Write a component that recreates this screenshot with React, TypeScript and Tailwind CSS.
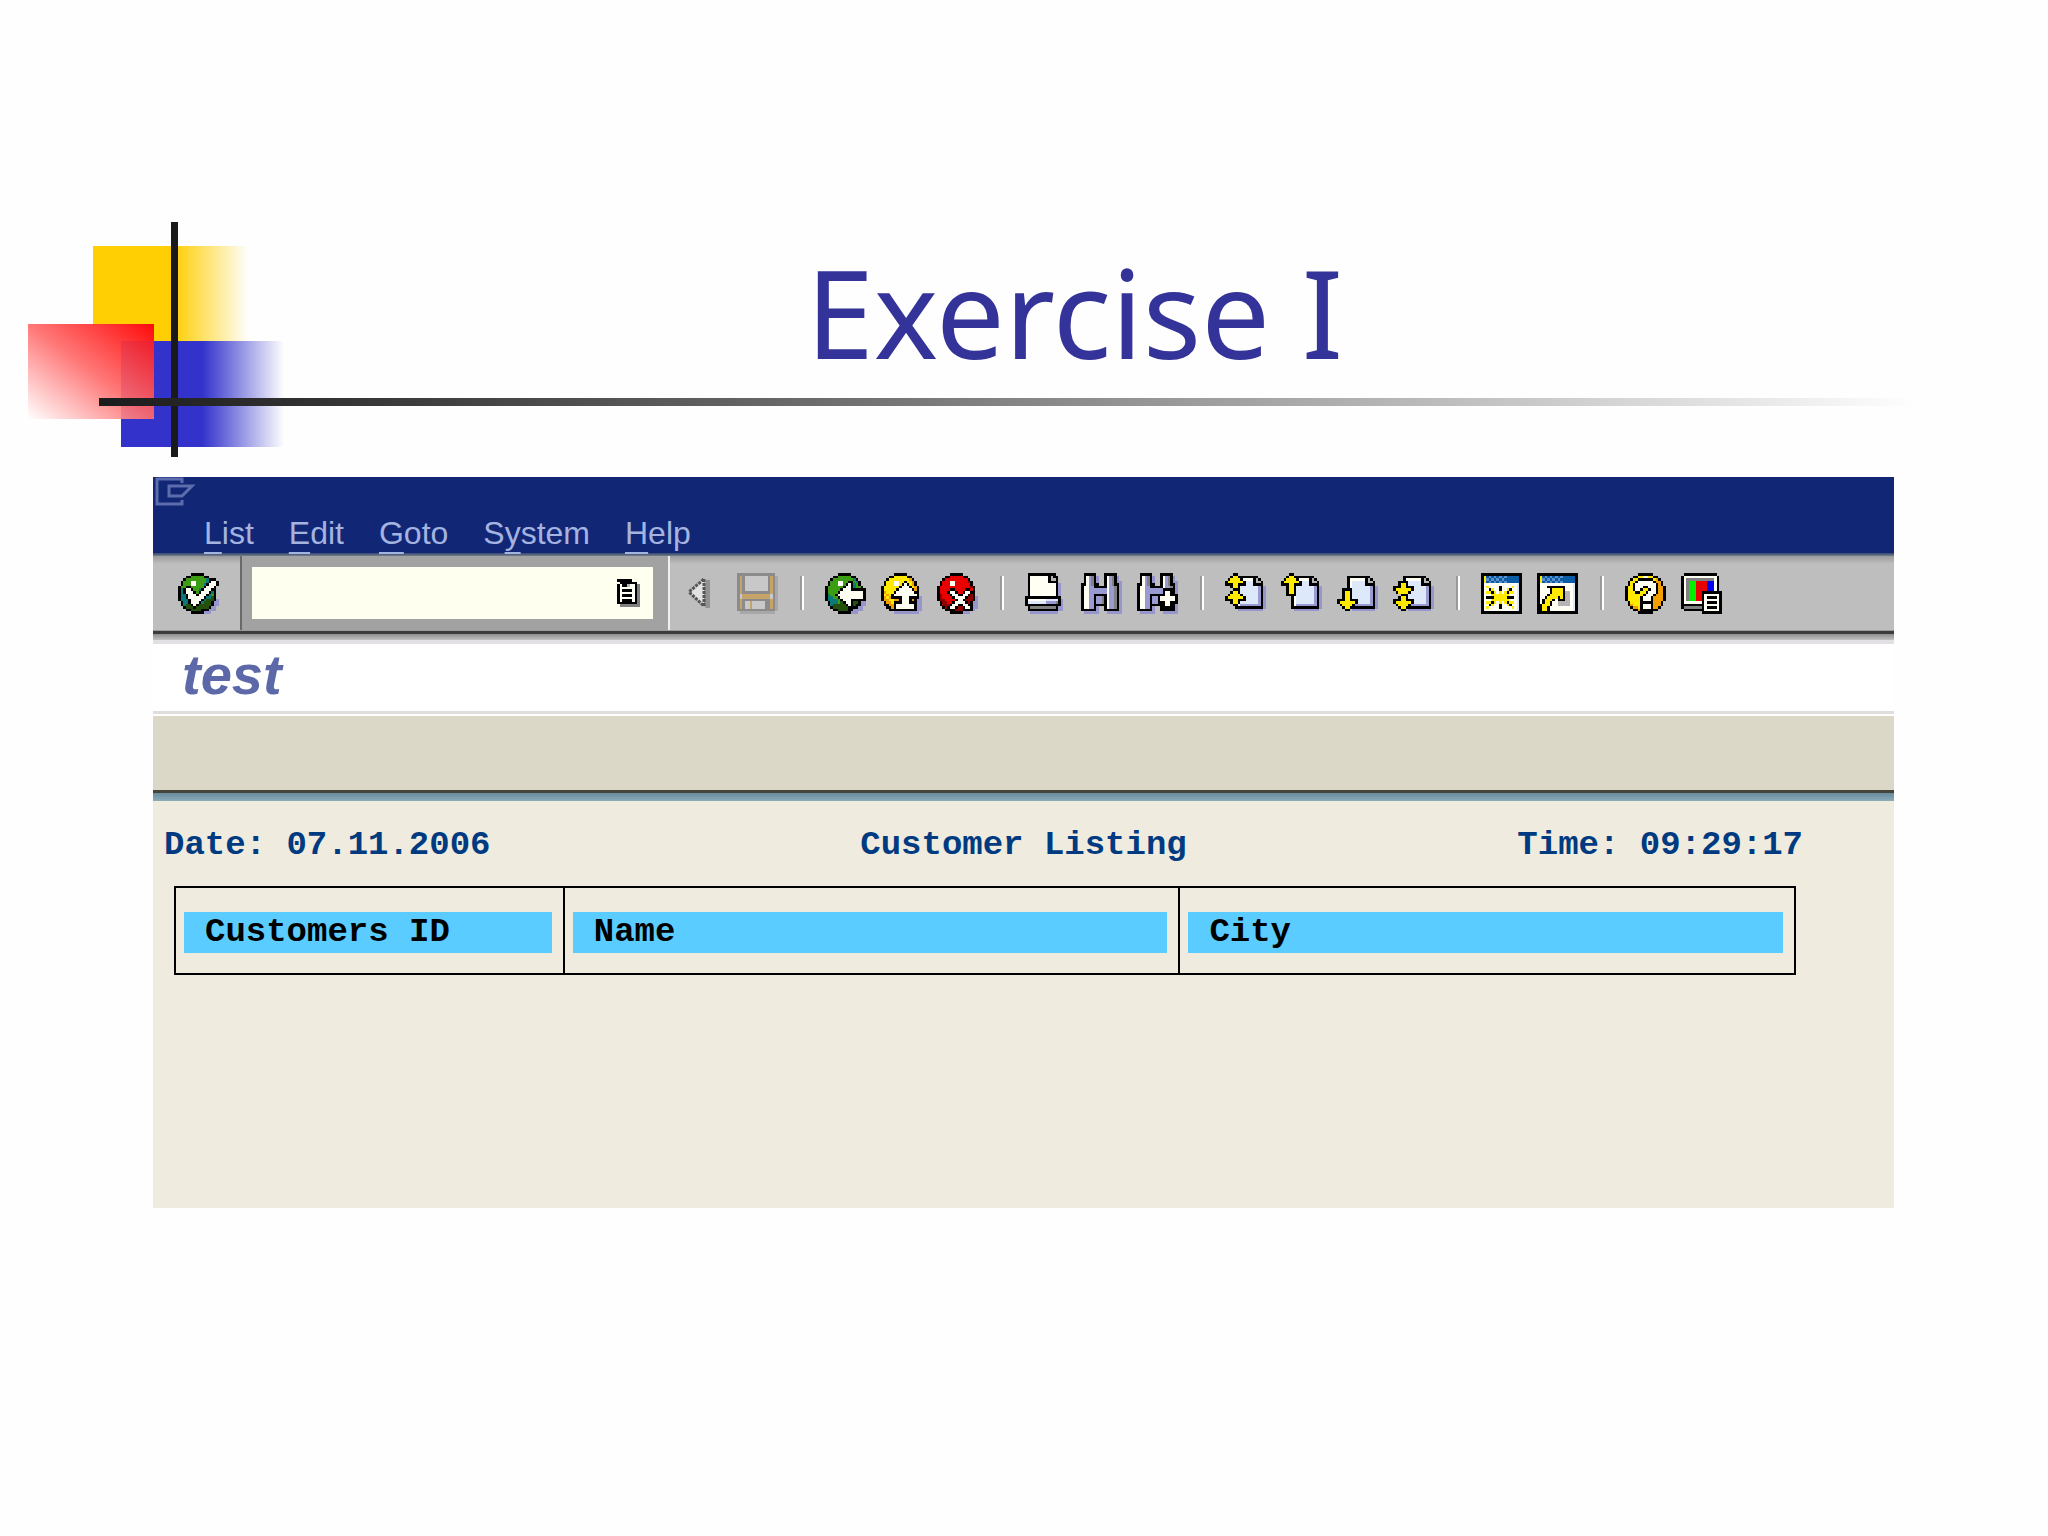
import React, { FC } from "react";

const COLORS: Record<string, string> = {
  k: "#000000",
  w: "#fffff4",
  g: "#3c9c14",
  t: "#0a7a78",
  d: "#24500c",
  s: "#9696cc",
  y: "#ffea00",
  o: "#f2a000",
  r: "#e80000",
  m: "#8c0000",
  b: "#dde8fa",
  l: "#9a9ad2",
  n: "#808080",
  f: "#b4b4b4",
  q: "#8c8a8a",
  e: "#a8a8a8",
  a: "#c4a468",
  v: "#c8c8c8",
  B: "#0a5ca4",
  c: "#5c90cc",
  G: "#00f000",
  U: "#0000f0",
};

const CHECK = [
  ".....kkkkk......",
  "...kkgggggkk....",
  "..kggggggggtkkk.",
  ".kgggwwggggtkwwk",
  ".kgggwwgggtkwwwk",
  "kggkkgggggkwwwk.",
  "ktkwwkggtkwwwkk.",
  "ktkwwwkgkwwwktk.",
  "kttkwwwkwwwktgk.",
  "kttkwwwwwwkttdk.",
  "ktttkwwwwktdddks",
  ".kttkwwwktdddkss",
  ".ktddkwkdddddkss",
  "..kdddkdddddkss.",
  "...kkddddkkksss.",
  ".....kkkkksss...",
];

const BACK = [
  ".....kkkkk......",
  "...kkgggggkk....",
  "..kggggggggtk...",
  ".kgggwwggkkgtk..",
  ".kgggwwgkwktgk..",
  "kggggggkwwktggk.",
  "kgggggkwwwkkkkkk",
  "kggggkwwwwwwwwwk",
  "ktggkwwwwwwwwwwk",
  "kttggkwwwwwwwwwk",
  "kttttgkwwwkkkkkk",
  ".ktttgdkwwkddkss",
  ".ktdddddkwkdkkss",
  "..kddddddkkkkss.",
  "...kkddddkkssss.",
  ".....kkkkksss...",
];

const EXIT = [
  ".....kkkkk......",
  "...kkyyyyykk....",
  "..kyyyyyyyyok...",
  ".kyyywwyykyyok..",
  ".kyyywwykwkyok..",
  "kyyyyyykwwwkyok.",
  "kyyyyykwwwwwkok.",
  "koyyykwwwwwwwkk.",
  "kyoykwwwwwwwwwk.",
  "koyokkkkwwwkkkks",
  "kooyyookwwwkokss",
  ".kooykkkwwwkkkss",
  ".kkookwwwwwwwkss",
  "..kkokwwwwwwwkss",
  "...kkkkkkkkkkkss",
  ".....ssssssssss.",
];

const CANCEL = [
  ".....kkkkk......",
  "...kkrrrrrkk....",
  "..krrrrrrrrrk...",
  ".krrrwwrrrrrmk..",
  ".krrrwwrrrrrrk..",
  "krrrrrrrrrrrrmk.",
  "krrrrkkrrrrkkrk.",
  "krrrkwwkrrkwwkk.",
  "kmrrrkwwkkwwkmk.",
  "kmrrrrkwwwwkmmks",
  "kmmrrrrkwwkmmmks",
  ".kmmrrkwwwwkmkss",
  ".kmmmkwwkkwwkkss",
  "..kmkwwkmmkwwkss",
  "...kkkkmmmkkkks.",
  ".....kkkkksss...",
];

const PRINT = [
  ".kkkkkkkkkkk....",
  ".kwwwwwwwkfkk...",
  ".kwwwwwwwkffk...",
  ".kwwwwwwwkkkk...",
  ".kwwwwwwwwwwks..",
  ".kwwwwwwwwwwks..",
  ".kwwwwwwwwwwks..",
  ".kwwwwwwwwwwks..",
  ".kwwwwwwwwwwks..",
  "kkkkkkkkkkkkkk..",
  "kwwwwwwwbbbbbks.",
  "kbbbbbbbllllnks.",
  "kkkkkkkkkkkkkks.",
  ".knnnnnnnnnnkss.",
  ".kkkkkkkkkkkkss.",
  "..sssssssssss...",
];

const FIND = [
  ".kkkkk...kkkkk..",
  ".kwlnks..kwlnks.",
  ".kwlnks..kwlnks.",
  ".kwlnks..kwlnkss",
  "kkwlnkk..kwlnkks",
  "kwwllkkkkkwllnks",
  "kwwlllllllwllnks",
  "kwwlllllllwllnks",
  "kwwllkkkkkwllnks",
  "kwwllkllnkwllnks",
  "kwwllkllnkwllnks",
  "kwwllkllnkwllnks",
  "kwwllkkkkkwllnks",
  "kwwllks..kwllnks",
  "kkkkkks..kkkkkks",
  ".ssssss...ssssss",
];

const FIND_NEXT = [
  ".kkkkk...kkkkk..",
  ".kwlnks..kwlnks.",
  ".kwlnks..kwlnks.",
  ".kwlnks..kwlnkss",
  "kkwlnkk..kwlnkks",
  "kwwllkkkkkwllnks",
  "kwwlllllllkkkkks",
  "kwwlllllllkwwkks",
  "kwwllkkkkkkwwkkk",
  "kwwllkllkwwwwwwk",
  "kwwllkllkwwwwwwk",
  "kwwllkllkkkwwkkk",
  "kwwllkkkkkkwwkks",
  "kwwllks..kkkkkks",
  "kkkkkks..kkkkkks",
  ".ssssss...ssssss",
];

const FIRST_PAGE = [
  "...kk...........",
  "..kyykkkkkkkk...",
  ".kyyyykwwwwkfk..",
  "kyyyyyykbbbkffk.",
  "kkkyykkkbbbkkkk.",
  "..kyykbbbbbbblks",
  "...kkkbbbbbbblks",
  "..kyykbbbbbbblks",
  ".kyyyykbbbbbblks",
  "kyyyyyykbbbbblks",
  "kkkyykkkbbbbblks",
  "..kyykbbbbbbblks",
  "...kkwllllllllks",
  "....kkkkkkkkkkks",
  ".....ssssssssss.",
  "................",
];

const PREV_PAGE = [
  "...kk...........",
  "..kyykkkkkkkk...",
  ".kyyyykwwwwkfk..",
  "kyyyyyykbbbkffk.",
  "kkkyykkkbbbkkkk.",
  "..kyykbbbbbbblks",
  "..kyykbbbbbbblks",
  "..kyykbbbbbbblks",
  "..kkkkbbbbbbblks",
  "....kwbbbbbbblks",
  "....kwbbbbbbblks",
  "....kwbbbbbbblks",
  "....kwllllllllks",
  "....kkkkkkkkkkks",
  ".....ssssssssss.",
  "................",
];

const NEXT_PAGE = [
  "................",
  "....kkkkkkkkk...",
  "....kwwwwwwkfk..",
  "....kwbbbbbkffk.",
  "....kwbbbbbkkkk.",
  "....kwbbbbbbblks",
  "..kkkkbbbbbbblks",
  "..kyykbbbbbbblks",
  "..kyykbbbbbbblks",
  "..kyykbbbbbbblks",
  "kkkyykkkbbbbblks",
  "kyyyyyykbbbbblks",
  ".kyyyyklllllllks",
  "..kyykkkkkkkkkks",
  "...kk.sssssssss.",
  "................",
];

const LAST_PAGE = [
  "................",
  "....kkkkkkkkk...",
  "....kwwwwwwkfk..",
  "..kkkkbbbbbkffk.",
  "..kyykbbbbbkkkk.",
  "kkkyykkkbbbbblks",
  "kyyyyyykbbbbblks",
  ".kyyyykbbbbbblks",
  "...kkkbbbbbbblks",
  "..kyykbbbbbbblks",
  "kkkyykkkbbbbblks",
  "kyyyyyykbbbbblks",
  ".kyyyyklllllllks",
  "..kyykkkkkkkkkks",
  "...kk.sssssssss.",
  "................",
];

const NEW_SESSION = [
  "kkkkkkkkkkkkkkkk",
  "kyBcBcBcBcBBBBBk",
  "kycBcBcBcBBBBBBk",
  "kyBcBcBcBcBBBBBk",
  "kwwwwwwwwwwwwwbk",
  "kwywwwwkwwwwywbk",
  "kwwkywwkwwykwwbk",
  "kwyykywywykyywbk",
  "kwwwyyyyyyywwwbk",
  "kwkkkyyyyykkkwbk",
  "kwwwyyyyyyywwwbk",
  "kwyykywywykyywbk",
  "kwwkywwkwwykwwbk",
  "kwywwwwkwwwwywbk",
  "kwwwwwwwwwwwwwbk",
  "kkkkkkkkkkkkkkkk",
];

const SHORTCUT = [
  "kkkkkkkkkkkkkkkk",
  "kyBcBcBcBcBBBBBk",
  "kycBcBcBcBBBBBBk",
  "kyBcBcBcBcBBBBBk",
  "kwwwwwwwwwwwwwbk",
  "kwwwkkkkkkkwwwbk",
  "kwwwwkyyyykwwwbk",
  "kwwwwkyyyykffwbk",
  "kwwwkyyyyykffwbk",
  "kwwkyyyykykffwbk",
  "kwkyyykwkkkffwbk",
  "kwkyykwwfffffwbk",
  "kkyyykwwfffffwbk",
  "kkyykwwwwwwwwwbk",
  "kkyykwwwwwwwwwbk",
  "kkkkkkkkkkkkkkkk",
];

const HELP = [
  ".....kkkkkk.....",
  "...kkyywwyykk...",
  "..kyykkkkkkyok..",
  ".kyykwwwwwwkook.",
  ".kykwwwwwwwwkok.",
  "kyykwwwkkwwwkook",
  "kyykwwkyykwwkook",
  "kyyykkyykwwwkook",
  "kyyyyyykwwwkoook",
  "kyyyyykwwwkooook",
  "kyyyyykwwwkooook",
  ".kyyyykkkkkoook.",
  ".koyyykwwwkoook.",
  "..kooykwwwkook..",
  "...kkokkkkkkk...",
  ".....kkkkkk.....",
];

const LAYOUT = [
  ".kkkkkkkkkkkkk..",
  "kwwwwwwwwwwwwwk.",
  "kwnnnnnnnnnnnwk.",
  "kwnGGGrrrrUUUwk.",
  "kwnGGGrrrrUUUwk.",
  "kwnGGGrrrrUUUwk.",
  "kwnGGGrrrrUUUwk.",
  "kwnGGGrrkkkkkkkk",
  "kwnGGGrrkwwwwwwk",
  "kwnGGGrrkwkkkkwk",
  "kwnGGGrrkwwwwwwk",
  "kwwwwwwwkwkkkkwk",
  "kkkkkkkkkwwwwwwk",
  "knnnnnnnkwkkkkwk",
  ".kkkkkkkkwwwwwwk",
  "........kkkkkkkk",
];

const SAVE = [
  "qqqqqqqqqqqqqqq.",
  "qaqvvvvvvvvvqaqe",
  "qaqvvvvvvvvvqaqe",
  "qaqvvvvvvvvvqaqe",
  "qaqvvvvvvvvvqaqe",
  "qaqvvvvvvvvvqaqe",
  "qaqvvvvvvvvvqaqe",
  "qaqqqqqqqqqqqaqe",
  "qvaaaaaaaaaaavqe",
  "qvaaaaaaaaaaavqe",
  "qaqqqqqqqqqqqaqe",
  "qaqvvavvvvvqqaqe",
  "qaqvvavvvvvqqaqe",
  "qaqvvavvvvvqqaqe",
  "qqqqqqqqqqqqqqqe",
  ".eeeeeeeeeeeeee.",
];

const HISTORY = [
  "kkkkkk...",
  ".kkkkkkk.",
  "kwkkfwwkn",
  "kwwwwwwkn",
  "kwkkkkwkn",
  "kwwwwwwkn",
  "kwkkkkwkn",
  "kwwwwwwkn",
  "kwkkkkwkn",
  "kkkkkkkkn",
  ".nnnnnnnn",
];

const TOOL_GROUPS = [
  [
    { label: "Back", rows: BACK },
    { label: "Exit", rows: EXIT },
    { label: "Cancel", rows: CANCEL },
  ],
  [
    { label: "Print", rows: PRINT },
    { label: "Find", rows: FIND },
    { label: "Find next", rows: FIND_NEXT },
  ],
  [
    { label: "First page", rows: FIRST_PAGE },
    { label: "Previous page", rows: PREV_PAGE },
    { label: "Next page", rows: NEXT_PAGE },
    { label: "Last page", rows: LAST_PAGE },
  ],
  [
    { label: "New session", rows: NEW_SESSION },
    { label: "Create shortcut", rows: SHORTCUT },
  ],
  [
    { label: "Help", rows: HELP },
    { label: "Customize layout", rows: LAYOUT },
  ],
];

const MENUS = [
  { before: "", key: "L", after: "ist" },
  { before: "", key: "E", after: "dit" },
  { before: "", key: "G", after: "oto" },
  { before: "S", key: "y", after: "stem" },
  { before: "", key: "H", after: "elp" },
];

const COLUMNS = [
  { title: "Customers ID", width: "w-[24%]" },
  { title: "Name", width: "w-[38%]" },
  { title: "City", width: "w-[38%]" },
];

type PixelIconProps = { rows: string[]; className: string };

// one letter per pixel, "." is empty
const PixelIcon: FC<PixelIconProps> = ({ rows, className }) => {
  return (
    <svg
      viewBox={`0 0 ${rows[0].length} ${rows.length}`}
      preserveAspectRatio="none"
      shapeRendering="crispEdges"
      className={className}
      aria-hidden="true"
    >
      {rows.map((row, y) =>
        (row.match(/(.)\1*/g) || []).reduce<{ x: number; out: React.ReactNode[] }>(
          (acc, run) => {
            if (run[0] !== ".") {
              acc.out.push(
                <rect
                  key={`${acc.x}-${y}`}
                  x={acc.x}
                  y={y}
                  width={run.length}
                  height={1}
                  fill={COLORS[run[0]]}
                />
              );
            }
            acc.x += run.length;
            return acc;
          },
          { x: 0, out: [] }
        ).out
      )}
    </svg>
  );
};

const Separator: FC = () => (
  <span className="h-[34px] w-[4px] shrink-0 border-l-2 border-r-2 border-l-[#9a9a9a] border-r-white" />
);

const SlideHeader: FC = () => {
  return (
    <header className="relative h-[477px] pt-[238px] pl-[101px]">
      <svg
        viewBox="0 0 300 260"
        className="absolute left-0 top-[210px] h-[260px] w-[300px]"
        aria-hidden="true"
      >
        <defs>
          <linearGradient id="yellow">
            <stop offset="0.52" stopColor="#ffcf04" />
            <stop offset="1" stopColor="#ffcf04" stopOpacity="0" />
          </linearGradient>
          <linearGradient id="blue">
            <stop offset="0.5" stopColor="#3333cc" />
            <stop offset="1" stopColor="#3333cc" stopOpacity="0" />
          </linearGradient>
          <linearGradient id="red" x1="1" y1="0" x2="0" y2="1">
            <stop offset="0" stopColor="#ff0a0a" />
            <stop offset="0.5" stopColor="#ff7878" />
            <stop offset="1" stopColor="#ffffff" />
          </linearGradient>
        </defs>
        <rect x="93" y="36" width="156" height="95" fill="url(#yellow)" />
        <rect x="121" y="131" width="163" height="106" fill="url(#blue)" />
        <rect x="28" y="114" width="126" height="95" fill="url(#red)" />
        <rect x="121" y="131" width="33" height="78" fill="#b02060" opacity="0.2" />
        <rect x="171" y="12" width="7" height="235" fill="#1a1a1a" />
      </svg>
      <div className="absolute left-[99px] right-[128px] top-[398px] h-[8px] bg-linear-to-r from-[#1c1c1c] to-white" />
      <h1 className="text-center font-['Noto_Sans',sans-serif] text-[122px] leading-[148px] text-[#333399]">
        Exercise I
      </h1>
    </header>
  );
};

const MenuBar: FC = () => {
  return (
    <div className="h-[76px] bg-[#112775]">
      <svg viewBox="0 0 44 30" className="ml-[1px] h-[30px] w-[44px]" aria-hidden="true">
        <g fill="none" stroke="#5c6cac" strokeWidth="3">
          <path d="M28 6V2H3v25h25v-4" />
          <path d="M38 9H15v10h13z" />
        </g>
      </svg>
      <nav className="flex gap-[35px] pt-2 pl-[51px] text-[32px] leading-[36px] text-[#a5b3e0]">
        {MENUS.map(({ before, key, after }) => (
          <a key={key} href="#">
            {before}
            <span className="underline decoration-2 underline-offset-8">{key}</span>
            {after}
          </a>
        ))}
      </nav>
    </div>
  );
};

const Toolbar: FC = () => {
  return (
    <>
      <div className="h-[3px] bg-linear-to-b from-[#35466f] to-[#76808c]" />
      <div className="flex h-[75px] items-center border-b border-[#999] bg-[#bebebe] bg-linear-to-b from-[#9a9a9c] to-[#bebebe] to-[8px]">
        <button type="button" aria-label="Enter" className="ml-[25px]">
          <PixelIcon rows={CHECK} className="h-[41px] w-[41px]" />
        </button>
        <div className="ml-[21px] flex h-full items-center border-l-2 border-r-2 border-l-[#6a6a6a] border-r-[#f0f0f0] bg-[#a2a2a2] pl-[10px] pr-[15px]">
          <div className="flex h-[52px] w-[401px] items-center bg-[#fffff0]">
            <input
              type="text"
              aria-label="Command"
              className="h-full min-w-0 flex-1 bg-transparent px-2 text-[32px] outline-none"
            />
            <button type="button" aria-label="Command history" className="mr-[13px]">
              <PixelIcon rows={HISTORY} className="h-[28px] w-[23px]" />
            </button>
          </div>
        </div>
        <button type="button" aria-label="Collapse" className="ml-[17px]">
          <svg viewBox="0 0 24 32" className="h-[32px] w-[24px]" aria-hidden="true">
            <path d="M19 3h4v28h-4l-4-5z" fill="#929292" />
            <path d="M17 2v27L2 15z" fill="#e2e2e2" stroke="#555" strokeWidth="3" strokeDasharray="3 1" />
          </svg>
        </button>
        <button type="button" aria-label="Save" disabled className="ml-[26px]">
          <PixelIcon rows={SAVE} className="h-[41px] w-[41px]" />
        </button>
        {TOOL_GROUPS.map((group) => (
          <div key={group[0].label} className="ml-[22px] flex items-center gap-[21px]">
            <Separator />
            <div className="flex gap-[15px]">
              {group.map(({ label, rows }) => (
                <button key={label} type="button" aria-label={label}>
                  <PixelIcon rows={rows} className="h-[41px] w-[41px]" />
                </button>
              ))}
            </div>
          </div>
        ))}
      </div>
      <div className="h-[3px] bg-[#3c3c3e]" />
      <div className="h-[6px] bg-linear-to-b from-[#8e8e8e] to-[#c2c0c2]" />
      <div className="h-[4px] bg-[#e2e0e4]" />
    </>
  );
};

const Listing: FC = () => {
  return (
    <section className="bg-[#efebdf] pt-[24px] pb-[233px] font-['Liberation_Mono',monospace] text-[34px] leading-[41px] font-bold">
      <div className="grid grid-cols-3 px-[11px] text-[#003a80]">
        <p>Date: 07.11.2006</p>
        <p className="text-center">Customer Listing</p>
        <p className="pr-[80px] text-right">Time: 09:29:17</p>
      </div>
      <div className="mt-[20px] mr-[98px] ml-[21px]">
        <table className="w-full table-fixed border-collapse">
          <thead>
            <tr>
              {COLUMNS.map(({ title, width }) => (
                <th
                  key={title}
                  scope="col"
                  className={`${width} border-2 border-black pt-[24px] pr-[11px] pb-[20px] pl-2 text-left`}
                >
                  <div className="bg-[#5accff] pl-[21px] text-black">{title}</div>
                </th>
              ))}
            </tr>
          </thead>
        </table>
      </div>
    </section>
  );
};

const App: FC = () => {
  return (
    <div className="min-h-screen bg-[#fefefe] font-['Liberation_Sans',sans-serif]">
      <SlideHeader />
      <main className="mr-[154px] ml-[153px]">
        <MenuBar />
        <Toolbar />
        <h2 className="h-[67px] bg-white pl-[29px] text-[56px] leading-[62px] font-bold text-[#5c68a8] italic">
          test
        </h2>
        <div className="h-[3px] bg-[#dedede]" />
        <div className="h-[2px] bg-white" />
        <div className="h-[74px] bg-[#dcd8c7]" />
        <div className="h-[3px] bg-[#45453c]" />
        <div className="h-[8px] bg-linear-to-b from-[#6a8b9c] to-[#8aabba]" />
        <Listing />
      </main>
    </div>
  );
};

export default App;
